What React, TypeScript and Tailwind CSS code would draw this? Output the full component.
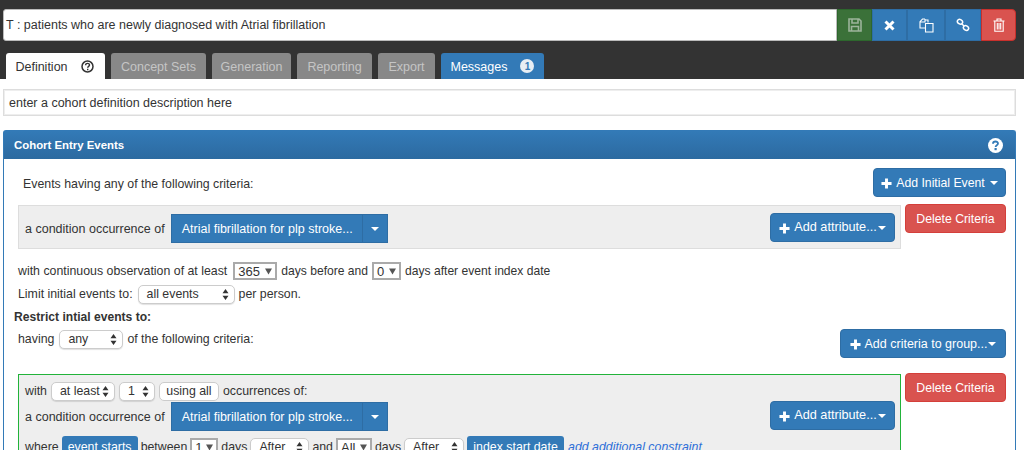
import React from "react";

const Plus = () => (
  <svg width="11" height="11" viewBox="0 0 12 12" className="shrink-0"><path d="M4.4 0.5h3.2v3.9h3.9v3.2H7.6v3.9H4.4V7.6H0.5V4.4h3.9z" fill="#fff" /></svg>
);
const Caret = ({ className = "" }: { className?: string }) => (
  <svg width="8" height="4" viewBox="0 0 8 4" className={className}><path d="M0 0h8L4 4z" fill="#fff" /></svg>
);
const Updown = () => (
  <svg width="7" height="11" viewBox="0 0 7 11" className="shrink-0"><path d="M3.5 0L6.5 4.2H.5zM3.5 11L.5 6.8h6z" fill="#333" /></svg>
);
const Sel = ({ w, children }: { w: string; children: React.ReactNode }) => (
  <span className={`inline-flex h-[19px] ${w} items-center justify-between rounded-[5px] border border-[#ccc] bg-white pl-2 pr-[5px] leading-none shadow-[0_1px_1px_rgba(0,0,0,0.12)]`}>
    <span>{children}</span>
    <Updown />
  </span>
);
const Drop = ({ w, children }: { w: string; children: React.ReactNode }) => (
  <span className={`inline-flex h-[18px] ${w} items-center justify-between border-2 border-[#aaa] bg-white pl-[3px] pr-[3px] text-[13px] leading-none`}>
    <span>{children}</span>
    <svg width="7" height="7" viewBox="0 0 7 7" className="shrink-0"><path d="M0 .5h7L3.5 6.5z" fill="#555" /></svg>
  </span>
);
const BlueBtn = ({ w, children }: { w: string; children: React.ReactNode }) => (
  <button className={`flex h-[29px] ${w} items-center justify-center gap-[4px] rounded-[4px] border border-[#2e6da4] bg-[#337ab7] pt-[1px] text-white`}>
    {children}
  </button>
);
const DeleteBtn = () => (
  <button className="h-[29px] w-[101px] rounded-[4px] border border-[#d43f3a] bg-[#d9534f] pt-[1px] text-[12.25px] text-white">Delete Criteria</button>
);
const Combo = () => (
  <span className="flex h-[29px] w-[217px] border border-[#2e6da4] bg-[#337ab7] text-[12.5px] text-white">
    <span className="flex flex-1 items-center justify-center border-r border-[#2e6da4] pl-px pt-[1px]">Atrial fibrillation for plp stroke...</span>
    <span className="flex w-[24px] items-center justify-center"><Caret /></span>
  </span>
);
const Attr = () => (
  <BlueBtn w="w-[125px] text-[12.7px]"><Plus />Add attribute...<Caret className="-ml-[3px]" /></BlueBtn>
);
const TB = ({ w, c, children }: { w: string; c: string; children: React.ReactNode }) => (
  <span className={`flex h-full ${w} items-center justify-center border ${c}`}>{children}</span>
);
const Tab = ({ w, c, children }: { w: string; c: string; children: React.ReactNode }) => (
  <span className={`flex h-[26px] ${w} items-center justify-center rounded-t-[3px] pt-[2px] ${c}`}>{children}</span>
);

export default function App() {
  return (
    <div className="h-[450px] w-[1024px] overflow-hidden bg-white text-[12.35px] text-[#333]" style={{ fontFamily: '"Liberation Sans", Arial, sans-serif' }}>
      <div className="h-[79px] bg-[#333] pl-[3px] pt-[9px]">
        <div className="flex h-[32px] w-[1013px]">
          <div className="flex flex-1 items-center rounded-l-[3px] border border-[#bbb] bg-white pl-[2px] pt-[1px] text-[12.5px]">T : patients who are newly diagnosed with Atrial fibrillation</div>
          <TB w="w-[35px]" c="border-[#2d672d] bg-[#3b7139]">
            <svg width="14" height="14" viewBox="0 0 14 14" fill="none" stroke="#9db49b" strokeWidth="1.6"><path d="M1 1h10l2 2v10H1zM4 1.5v3.5h6V1.5M3.5 13V8.5h7V13" /></svg>
          </TB>
          <TB w="w-[35px]" c="border-[#2e6da4] bg-[#337ab7]">
            <svg width="11" height="11" viewBox="0 0 11 11"><path d="M1.5 1.5l8 8M9.5 1.5l-8 8" stroke="#fff" strokeWidth="3" /></svg>
          </TB>
          <TB w="w-[38px]" c="border-[#2e6da4] bg-[#337ab7]">
            <svg width="15" height="15" viewBox="0 0 15 15" fill="none" stroke="#fff" strokeWidth="1.1"><path d="M6 1H3.5L1 3.6V10h5M6 1v3H1.2M9 4.5V2H6M6.5 5.5h7.5V14H6.5z" /></svg>
          </TB>
          <TB w="w-[36px]" c="border-[#2e6da4] bg-[#337ab7]">
            <svg width="14" height="14" viewBox="0 0 14 14" fill="none" stroke="#fff" strokeWidth="1.5"><ellipse cx="4" cy="3.8" rx="2.7" ry="2.2" transform="rotate(30 4 3.8)" /><ellipse cx="10" cy="10" rx="2.7" ry="2.2" transform="rotate(30 10 10)" /><path d="M6 6l2 2" /></svg>
          </TB>
          <TB w="w-[35px] rounded-r-[4px]" c="border-[#c9302c] bg-[#d9534f]">
            <svg width="12" height="14" viewBox="0 0 12 14" fill="none" stroke="#fff" strokeWidth="1.1"><path d="M0.5 3h11M4 3V1h4v2M1.8 3v10.3h8.4V3M4.3 5v6.5M6 5v6.5M7.7 5v6.5" /></svg>
          </TB>
        </div>
        <div className="mt-[12px] flex gap-[6px] pl-[3px] text-[12.5px]">
          <Tab w="w-[99px] gap-[13px] pr-[2px]" c="bg-white text-[#333]">
            Definition
            <svg width="13" height="13" viewBox="0 0 13 13" fill="none" className="-mt-[2px]"><circle cx="6.5" cy="6.5" r="5.5" stroke="#333" strokeWidth="1.5" /><path d="M4.6 5.2c0-2.5 3.9-2.3 3.9-.2 0 1.3-1.8 1.4-1.8 2.8M6.7 8.8v1.5" stroke="#333" strokeWidth="1.4" /></svg>
          </Tab>
          <Tab w="w-[95px]" c="bg-[#888] text-[#c5c5c5]">Concept Sets</Tab>
          <Tab w="w-[79px]" c="bg-[#888] text-[#c5c5c5]">Generation</Tab>
          <Tab w="w-[75px]" c="bg-[#888] text-[#c5c5c5]">Reporting</Tab>
          <Tab w="w-[57px]" c="bg-[#888] text-[#c5c5c5]">Export</Tab>
          <Tab w="w-[103px] gap-[13px]" c="bg-[#337ab7] text-white">
            Messages
            <span className="-mt-[2px] flex h-[14px] w-[14px] items-center justify-center rounded-full bg-[#e8eef4] text-[10px] font-bold text-[#337ab7]">1</span>
          </Tab>
        </div>
      </div>

      <div className="px-[3px] pt-[10px]">
        <div className="flex h-[27px] w-[1013px] items-center border border-[#ddd] bg-white pl-[5px] pt-[2px] text-[12.5px] shadow-[inset_0_0_0_1px_#eee]">enter a cohort definition description here</div>

        <div className="mt-[14px] w-[1013px] rounded-t-[3px] border border-[#337ab7] border-b-0">
          <div className="flex h-[28px] items-center justify-between bg-gradient-to-b from-[#337ab7] to-[#2c6aa0] pl-[10px] pr-[12px] pt-[1px] text-[11.4px] font-bold text-white">
            <span>Cohort Entry Events</span>
            <svg width="15" height="15" viewBox="0 0 15 15"><circle cx="7.5" cy="7.5" r="7.5" fill="#fff" /><path d="M5 5.8c0-3.1 5-3 5-.2 0 1.7-2.4 1.6-2.4 3.3" fill="none" stroke="#337ab7" strokeWidth="1.8" /><rect x="6.5" y="10" width="2.2" height="2.2" fill="#337ab7" /></svg>
          </div>

          <div className="h-[292px] pl-[14px] pr-[9px] pt-[9px]">
            <div className="flex items-center justify-between pl-[5px]">
              <span className="pt-[3px]">Events having any of the following criteria:</span>
              <BlueBtn w="w-[133px] text-[12.25px]"><Plus />Add Initial Event<Caret className="ml-[1px]" /></BlueBtn>
            </div>

            <div className="mt-[7px] flex items-start justify-between">
              <div className="mt-[1px] flex h-[44px] w-[883px] items-start justify-between border border-[#ddd] bg-[#eee] pl-[6px] pr-[5px]">
                <span className="mt-[8px] flex items-center gap-[6px] text-[12.5px]"><span className="pt-[1px]">a condition occurrence of</span> <Combo /></span>
                <span className="mt-[7px]"><Attr /></span>
              </div>
              <DeleteBtn />
            </div>

            <div className="mt-[12px] flex items-center gap-[4px] leading-[19px]">
              <span className="pr-[2px] pt-[1px]">with continuous observation of at least</span> <Drop w="w-[44px]">365</Drop> <span className="pt-[1px] text-[12.1px]">days before and</span> <Drop w="w-[29px]">0</Drop> <span className="pt-[1px] text-[12.1px]">days after event index date</span>
            </div>
            <div className="mt-[3px] flex items-center gap-[4px] leading-[19px]">
              <span className="pr-px pt-[1px]">Limit initial events to:</span> <Sel w="w-[97px]">all events</Sel> <span className="pt-[1px]">per person.</span>
            </div>
            <div className="-ml-[4px] mt-[3px] pt-[1px] text-[12.1px] font-bold leading-[18px]">Restrict intial events to:</div>

            <div className="mt-[3px] flex items-start justify-between">
              <div className="flex items-center gap-[4px] leading-[19px]">
                <span className="pr-px pt-[1px]">having</span> <Sel w="w-[64px]">any</Sel> <span className="pt-[1px]">of the following criteria:</span>
              </div>
              <BlueBtn w="w-[166px] text-[12.5px]"><Plus />Add criteria to group...<Caret className="-ml-[3px]" /></BlueBtn>
            </div>

            <div className="mt-[15px] flex items-start justify-between">
              <div className="mt-[1px] h-[90px] w-[883px] border border-[#22b33a] bg-[#eee] pl-[6px] pr-[5px] pt-[6px]">
                <div className="flex items-center gap-[4px] leading-[19px]">
                  <span className="pt-[1px]">with</span> <Sel w="w-[64px]">at least</Sel><Sel w="w-[36px]">1</Sel>
                  <span className="flex h-[19px] w-[60px] items-center justify-center rounded-[5px] border border-[#ccc] bg-white leading-none">using all</span>
                  <span className="pt-[1px]">occurrences of:</span>
                </div>
                <div className="mt-[1px] flex items-start justify-between">
                  <span className="flex items-center gap-[6px] text-[12.5px]"><span className="pt-[1px]">a condition occurrence of</span> <Combo /></span>
                  <span className="-mt-[1px]"><Attr /></span>
                </div>
                <div className="mt-[5px] flex items-center gap-[3px] leading-[19px]">
                  <span className="pt-[1px]">where</span>
                  <span className="flex h-[22px] w-[76px] items-center justify-center rounded-[3px] bg-[#337ab7] pt-[1px] text-white">event starts</span>
                  <span className="pt-[1px]">between</span> <Drop w="w-[28px]">1</Drop> <span className="pt-[1px]">days</span> <Sel w="w-[59px]">After</Sel> <span className="pt-[1px]">and</span> <Drop w="w-[36px]">All</Drop> <span className="pt-[1px]">days</span> <Sel w="w-[60px]">After</Sel>
                  <span className="flex h-[22px] w-[97px] items-center justify-center rounded-[3px] bg-[#337ab7] pt-[1px] text-white">index start date</span>
                  <span className="pl-[1px] pt-[1px] italic text-[#2e6fd8]">add additional constraint</span>
                </div>
              </div>
              <DeleteBtn />
            </div>
          </div>
        </div>
      </div>
    </div>
  );
}
